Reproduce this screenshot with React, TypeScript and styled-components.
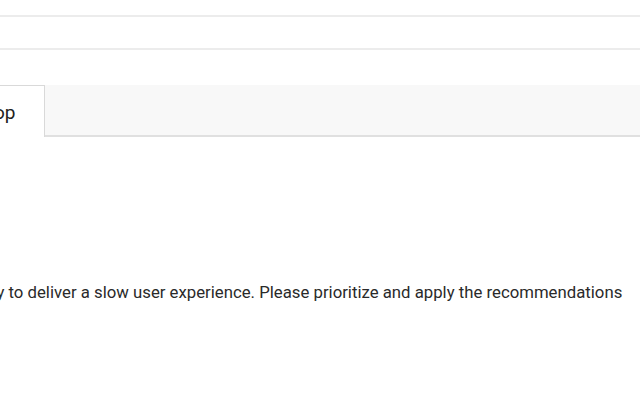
import React from "react";
import styled, { createGlobalStyle } from "styled-components";

const Global = createGlobalStyle`
  html, body { margin: 0; padding: 0; background: #ffffff; }
  body { font-family: Roboto, "Liberation Sans", Arial, sans-serif; color: #333333; overflow: hidden; }
`;

const Page = styled.div`
  width: 640px;
  height: 400px;
  overflow: hidden;
  display: flex;
  flex-direction: column;
`;

const Rule = styled.div<{ $top: number }>`
  height: 2px;
  background: #ececec;
  margin-top: ${(p) => p.$top}px;
`;

const TabBar = styled.div`
  margin-top: 35px;
  height: 50px;
  background: #f8f8f8;
  border-bottom: 2px solid #e0e0e0;
  display: flex;
  align-items: stretch;
`;

const Tab = styled.div`
  margin-left: -54px;
  background: #ffffff;
  border: 1px solid #d9d9d9;
  border-bottom: none;
  border-left: none;
  display: flex;
  align-items: center;
  padding: 1px 28px 0 0;
  font-size: 19px;
  color: #212121;
  margin-bottom: -2px;
`;

const Summary = styled.p`
  margin: 143px 0 0 0;
  white-space: nowrap;
  font-size: 16.75px;
  line-height: 24px;
  color: #2a2a2a;
  text-indent: -33px;
`;

export default function App() {
  return (
    <Page>
      <Global />
      <Rule $top={15} />
      <Rule $top={31} />
      <TabBar>
        <Tab>Desktop</Tab>
      </TabBar>
      <Summary>
        likely to deliver a slow user experience. Please prioritize and apply the recommendations
      </Summary>
    </Page>
  );
}
